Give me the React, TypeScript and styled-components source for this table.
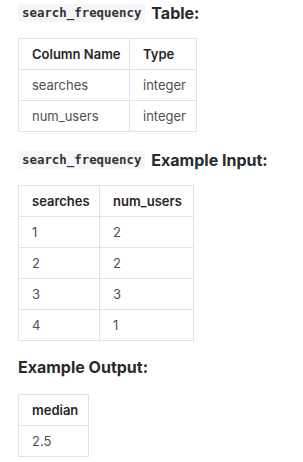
import styled, { createGlobalStyle } from "styled-components";

const GlobalStyle = createGlobalStyle`
  body {
    margin: 0;
    background: #ffffff;
    font-family: Inter, "Noto Sans", sans-serif;
    color: #262626;
  }
`;

const Page = styled.div`
  padding: 4px 18px 0;
`;

const Heading = styled.div<{ $gap: number }>`
  display: flex;
  align-items: center;
  gap: 6px;
  margin-top: ${(p) => p.$gap}px;
  font-size: 16px;
  font-weight: 700;
  line-height: 18px;
  color: #262b30;
`;

const Code = styled.code`
  display: inline-block;
  padding: 0 4px;
  border-radius: 3px;
  background: #f4f6f8;
  font-family: "DejaVu Sans Mono", monospace;
  font-size: 12.4px;
  font-weight: 700;
  line-height: 18px;
  color: #333;
`;

const Table = styled.table<{ $gap: number; $w: number }>`
  width: ${(p) => p.$w}px;
  margin-top: ${(p) => p.$gap}px;
  border-collapse: collapse;
  table-layout: fixed;
  font-size: 13px;
`;

const Col = styled.col<{ $w: number }>`
  width: ${(p) => p.$w}px;
`;

const Cell = styled.td<{ $head?: boolean }>`
  height: 30px;
  padding: 0 12px 0 13px;
  border: 1px solid #e0e2e5;
  text-align: left;
  font-weight: ${(p) => (p.$head ? 600 : 400)};
  color: ${(p) => (p.$head ? "#262626" : "#505050")};
  white-space: nowrap;
  overflow: hidden;
`;

const DataTable = ({
  head,
  rows,
  widths,
  gap = 16,
}: {
  head: string[];
  rows: string[][];
  widths: number[];
  gap?: number;
}) => (
  <Table $gap={gap} $w={widths.reduce((a, b) => a + b, 0)}>
    <colgroup>
      {widths.map((w, i) => (
        <Col key={i} $w={w} />
      ))}
    </colgroup>
    <tbody>
      <tr>
        {head.map((h) => (
          <Cell key={h} $head>
            {h}
          </Cell>
        ))}
      </tr>
      {rows.map((r, i) => (
        <tr key={i}>
          {r.map((c, j) => (
            <Cell key={j}>{c}</Cell>
          ))}
        </tr>
      ))}
    </tbody>
  </Table>
);

export default function App() {
  return (
    <Page>
      <GlobalStyle />
      <Heading $gap={0}>
        <Code>search_frequency</Code>
        Table:
      </Heading>
      <DataTable
        head={["Column Name", "Type"]}
        rows={[
          ["searches", "integer"],
          ["num_users", "integer"],
        ]}
        widths={[111, 67]}
      />
      <Heading $gap={19}>
        <Code>search_frequency</Code>
        Example Input:
      </Heading>
      <DataTable
        head={["searches", "num_users"]}
        rows={[
          ["1", "2"],
          ["2", "2"],
          ["3", "3"],
          ["4", "1"],
        ]}
        widths={[81, 94]}
      />
      <Heading $gap={17}>Example Output:</Heading>
      <DataTable head={["median"]} rows={[["2.5"]]} widths={[70]} gap={18} />
    </Page>
  );
}
